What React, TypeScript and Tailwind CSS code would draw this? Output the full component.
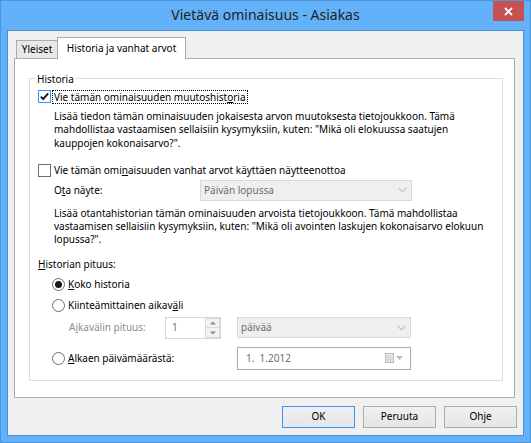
import React from "react";

const font = "font-['Noto_Sans',sans-serif]";

function CheckBox({ checked, focused }: { checked?: boolean; focused?: boolean }) {
  return (
    <span
      className={
        "flex h-[13px] w-[13px] shrink-0 items-center justify-center border bg-white " +
        (focused ? "border-[#3399ff]" : "border-[#707070]")
      }
    >
      {checked && (
        <svg width="11" height="11" viewBox="0 0 11 11">
          <path d="M1.8 5.6 L4.2 8 L9.2 2.4" fill="none" stroke="#1a1a1a" strokeWidth="1.9" />
        </svg>
      )}
    </span>
  );
}

function Radio({ checked }: { checked?: boolean }) {
  return (
    <span className="flex h-[13px] w-[13px] shrink-0 items-center justify-center rounded-full border border-[#6e6e6e] bg-white">
      {checked && <span className="h-[7px] w-[7px] rounded-full bg-[#1a1a1a]" />}
    </span>
  );
}

function Chevron() {
  return (
    <svg width="9" height="6" viewBox="0 0 9 6">
      <path d="M0.5 0.8 L4.5 4.8 L8.5 0.8" fill="none" stroke="#c2c2c2" strokeWidth="1.2" />
    </svg>
  );
}

function DisabledSelect({ value, className }: { value: string; className: string }) {
  return (
    <div
      className={
        "flex h-[21px] items-center justify-between border border-[#d9d9d9] bg-[#efefef] pl-[3px] pr-[4px] text-[#6d6d6d] " +
        className
      }
    >
      <span>{value}</span>
      <Chevron />
    </div>
  );
}

function Button({ label, primary }: { label: string; primary?: boolean }) {
  return (
    <button
      className={
        "flex h-[22px] w-[73px] items-center justify-center border bg-gradient-to-b from-[#f0f0f0] to-[#e5e5e5] text-black " +
        (primary ? "border-[#3399ff]" : "border-[#acacac]")
      }
    >
      {label}
    </button>
  );
}

export default function App() {
  return (
    <div
      className={
        "flex h-[443px] w-[531px] flex-col border border-[#4a96dc] bg-[#63b1f8] text-[10px] leading-[13.3px] text-black " +
        font
      }
    >
      {/* Title bar */}
      <div className="flex h-[29px] items-start justify-between">
        <div className="w-[37px]" />
        <div className="pt-[6px] text-[14px] leading-[16px] text-[#222]">Vietävä ominaisuus - Asiakas</div>
        <div className="mr-[6px] flex h-[20px] w-[31px] items-center justify-center bg-[#c75050]">
          <svg width="9" height="9" viewBox="0 0 9 9">
            <path d="M1 1 L8 8 M8 1 L1 8" stroke="white" strokeWidth="1.8" />
          </svg>
        </div>
      </div>

      {/* Client area */}
      <div className="mx-[6px] mb-[6px] flex flex-1 flex-col border border-[#4a90d0] bg-[#f0f0f0]">
        {/* Tabs */}
        <div className="ml-[8px] mt-[6px] flex h-[21px] items-end">
          <div className="flex h-[18px] w-[41px] items-center justify-center border-l border-t border-[#acacac] bg-[#e8e8e8] pt-[1px]">
            Yleiset
          </div>
          <div className="relative z-10 -mb-px flex h-[22px] w-[129px] items-center justify-center border-l border-r border-t border-[#acacac] bg-white">
            Historia ja vanhat arvot
          </div>
        </div>

        {/* Panel */}
        <div className="ml-[6px] mr-[8px] h-[340px] border border-[#acacac] bg-white pl-[14px] pr-[11px] pt-[19px]">
          <div className="relative h-[303px] border border-[#dcdcdc] pl-[8px] pt-[11px]">
            <span className="absolute -top-[7px] left-[5px] bg-white px-[2px] leading-[14px]">Historia</span>

            <div className="flex h-[13px] items-center gap-[1px]">
              <CheckBox checked focused />
              <span className="border border-dotted border-black px-[1px] leading-[12px]">
                Vie tämän ominaisuuden muutoshist<u className="underline-offset-1">o</u>ria
              </span>
            </div>
            <p className="ml-[16px] mt-[7px] whitespace-nowrap">
              Lisää tiedon tämän ominaisuuden jokaisesta arvon muutoksesta tietojoukkoon. Tämä
              <br />
              mahdollistaa vastaamisen sellaisiin kysymyksiin, kuten: "Mikä oli elokuussa saatujen
              <br />
              kauppojen kokonaisarvo?".
            </p>

            <div className="mt-[14px] flex h-[13px] items-center gap-[3px]">
              <CheckBox />
              <span>
                Vie tämän omi<u className="underline-offset-1">n</u>aisuuden vanhat arvot käyttäen näytteenottoa
              </span>
            </div>
            <div className="ml-[16px] mt-[3px] flex items-center">
              <span className="w-[146px]">
                O<u className="underline-offset-1">t</u>a näyte:
              </span>
              <DisabledSelect value="Päivän lopussa" className="w-[212px]" />
            </div>
            <p className="ml-[16px] mt-[6px] whitespace-nowrap">
              Lisää otantahistorian tämän ominaisuuden arvoista tietojoukkoon. Tämä mahdollistaa
              <br />
              vastaamisen sellaisiin kysymyksiin, kuten: "Mikä oli avointen laskujen kokonaisarvo elokuun
              <br />
              lopussa?".
            </p>

            <div className="mt-[10px] leading-[14px]">
              <u className="underline-offset-1">H</u>istorian pituus:
            </div>
            <div className="ml-[14px] mt-[7px] flex h-[13px] items-center gap-[3px]">
              <Radio checked />
              <span>
                <u className="underline-offset-1">K</u>oko historia
              </span>
            </div>
            <div className="ml-[14px] mt-[8px] flex h-[13px] items-center gap-[3px]">
              <Radio />
              <span>
                Kiinteämittainen aikav<u className="underline-offset-1">ä</u>li
              </span>
            </div>
            <div className="ml-[31px] mt-[5px] flex h-[22px] items-center">
              <span className="w-[96px] text-[#8d8d8d]">
                A<u className="underline-offset-1">i</u>kavälin pituus:
              </span>
              <div className="flex h-[22px] w-[56px] items-stretch border border-[#d9d9d9] bg-white">
                <span className="flex flex-1 items-center pl-[6px] text-[#6d6d6d]">1</span>
                <div className="flex w-[15px] flex-col">
                  <div className="flex flex-1 items-center justify-center border border-[#d9d9d9] bg-[#f3f3f3]">
                    <svg width="6" height="4" viewBox="0 0 6 4">
                      <path d="M0 3.5 L3 0.5 L6 3.5 Z" fill="#8a8a8a" />
                    </svg>
                  </div>
                  <div className="-mt-px flex flex-1 items-center justify-center border border-[#d9d9d9] bg-[#f3f3f3]">
                    <svg width="6" height="4" viewBox="0 0 6 4">
                      <path d="M0 0.5 L3 3.5 L6 0.5 Z" fill="#8a8a8a" />
                    </svg>
                  </div>
                </div>
              </div>
              <DisabledSelect value="päivää" className="ml-[16px] w-[174px]" />
            </div>
            <div className="ml-[14px] mt-[8px] flex h-[23px] items-center">
              <Radio />
              <span className="ml-[3px] w-[169px]">
                <u className="underline-offset-1">A</u>lkaen päivämäärästä:
              </span>
              <div className="flex h-[23px] w-[174px] items-center justify-between border border-[#acacac] bg-white pl-[8px] pr-[7px] text-[#6d6d6d]">
                <span className="whitespace-pre">1.  1.2012</span>
                <span className="flex items-center gap-[2px]">
                  <svg width="9" height="10" viewBox="0 0 9 10">
                    <rect x="0.5" y="0.5" width="8" height="9" fill="#f2f2f2" stroke="#b5b5b5" />
                    <path d="M0.5 3 H8.5 M0.5 5 H8.5 M0.5 7 H8.5 M3 2 V9.5 M5.5 2 V9.5" stroke="#c8c8c8" strokeWidth="0.8" />
                  </svg>
                  <svg width="7" height="4" viewBox="0 0 7 4">
                    <path d="M0 0 L3.5 4 L7 0 Z" fill="#bdbdbd" />
                  </svg>
                </span>
              </div>
            </div>
          </div>
        </div>

        {/* Buttons */}
        <div className="mr-[6px] mt-[8px] flex justify-end gap-[8px]">
          <Button label="OK" primary />
          <Button label="Peruuta" />
          <Button label="Ohje" />
        </div>
      </div>
    </div>
  );
}
